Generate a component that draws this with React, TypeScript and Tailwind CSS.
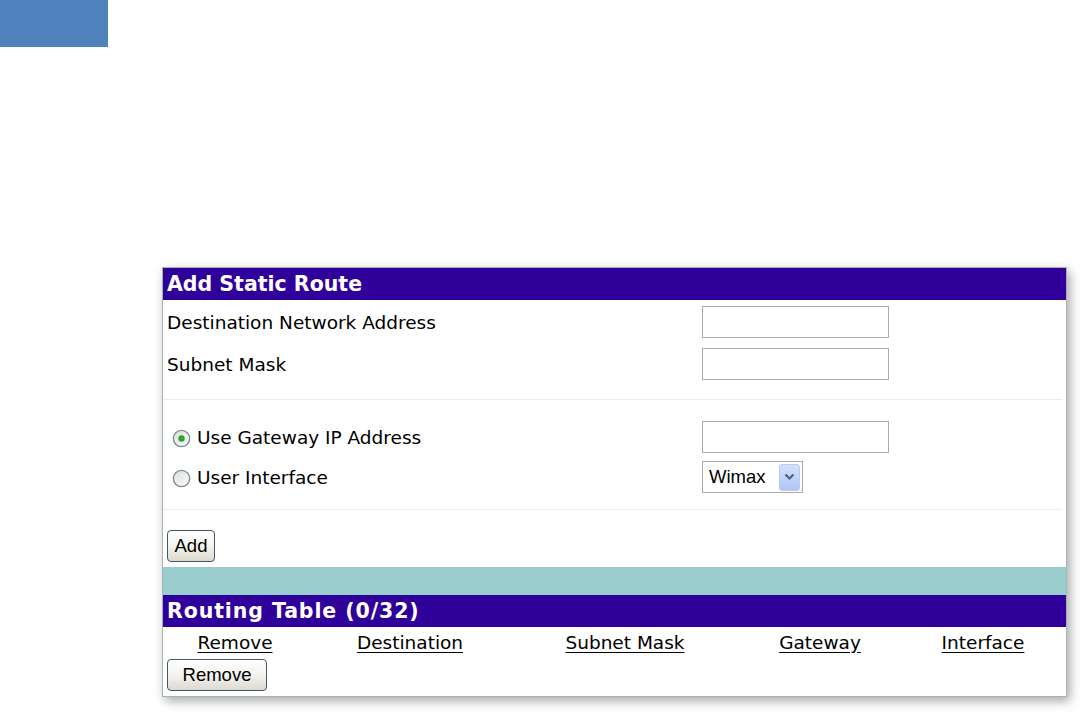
import React from "react";

function Radio({ checked }: { checked?: boolean }) {
  return (
    <svg width="19" height="19" viewBox="0 0 19 19" className="shrink-0">
      <defs>
        <linearGradient id={checked ? "rg1" : "rg2"} x1="0" y1="0" x2="1" y2="1">
          <stop offset="0" stopColor="#d9dbd6" />
          <stop offset="1" stopColor="#ffffff" />
        </linearGradient>
      </defs>
      <circle cx="9.5" cy="9.5" r="8.2" fill={`url(#${checked ? "rg1" : "rg2"})`} stroke="#7d8c99" strokeWidth="1.3" />
      {checked && <circle cx="9.5" cy="9.5" r="3.2" fill="#2ea52e" />}
    </svg>
  );
}

function Btn({ children, w }: { children: React.ReactNode; w: string }) {
  return (
    <div
      className={`${w} h-[32px] flex items-center justify-center rounded-[4px] border border-[#44546a] bg-gradient-to-b from-[#ffffff] via-[#f4f3ee] to-[#dcdad0] text-[18.5px] text-black`}
      style={{ fontFamily: '"Liberation Sans", Arial, sans-serif' }}
    >
      {children}
    </div>
  );
}

function TextInput() {
  return <div className="w-[187px] h-[32px] border border-[#a5acb2] bg-white" />;
}

export default function App() {
  const cols = [
    { label: "Remove", w: "w-[144px]" },
    { label: "Destination", w: "w-[206px]" },
    { label: "Subnet Mask", w: "w-[224px]" },
    { label: "Gateway", w: "w-[166px]" },
    { label: "Interface", w: "w-[160px]" },
  ];
  return (
    <div
      className="w-[1088px] h-[720px] bg-white relative overflow-hidden text-black"
      style={{ fontFamily: '"DejaVu Sans", Verdana, sans-serif' }}
    >
      <div className="w-[108px] h-[47px] bg-[#4f81bd]" />
      <div className="ml-[162px] mt-[220px] w-[905px] border border-[#a3b5b5] bg-white shadow-[3px_4px_10px_rgba(0,0,0,0.35)]">
        {/* Header */}
        <div className="h-[32px] bg-[#30009a] flex items-center pl-[4px] text-white font-bold text-[20.5px] leading-none">
          Add Static Route
        </div>
        {/* Block 1 */}
        <div className="pt-[6px] pb-[19px] flex flex-col gap-[10px]">
          <div className="flex items-center h-[32px]">
            <div className="w-[539px] pl-[4px] pt-[2px] text-[18.5px]">Destination Network Address</div>
            <TextInput />
          </div>
          <div className="flex items-center h-[32px]">
            <div className="w-[539px] pl-[4px] pt-[2px] text-[18.5px]">Subnet Mask</div>
            <TextInput />
          </div>
        </div>
        <div className="h-[1px] mr-[4px] bg-[#ececec]" />
        {/* Block 2 */}
        <div className="pt-[21px] pb-[16px] flex flex-col gap-[8px]">
          <div className="flex items-center h-[32px]">
            <div className="w-[539px] pl-[9px] pt-[2px] flex items-center gap-[6px] text-[18.5px]">
              <Radio checked />
              <span>Use Gateway IP Address</span>
            </div>
            <TextInput />
          </div>
          <div className="flex items-center h-[32px]">
            <div className="w-[539px] pl-[9px] pt-[2px] flex items-center gap-[6px] text-[18.5px]">
              <Radio />
              <span>User Interface</span>
            </div>
            <div className="w-[101px] h-[32px] border border-[#a5acb2] bg-white flex items-center justify-between pl-[6px] pr-[2px]">
              <span className="text-[18.5px]" style={{ fontFamily: '"Liberation Sans", Arial, sans-serif' }}>
                Wimax
              </span>
              <div className="w-[21px] h-[27px] rounded-[3px] bg-gradient-to-b from-[#d3e0fd] to-[#b1c6f5] border border-[#b9cbf3] flex items-center justify-center">
                <svg width="11" height="8" viewBox="0 0 11 8">
                  <path d="M1.5 1.5 L5.5 5.5 L9.5 1.5" fill="none" stroke="#4d6185" strokeWidth="2.2" />
                </svg>
              </div>
            </div>
          </div>
        </div>
        <div className="h-[1px] mr-[4px] bg-[#ececec]" />
        <div className="pt-[20px] pb-[5px] pl-[4px]">
          <Btn w="w-[48px]">Add</Btn>
        </div>
        <div className="h-[28px] bg-[#99cccc]" />
        <div className="h-[32px] bg-[#30009a] flex items-center pl-[4px] text-white font-bold text-[20.5px] leading-none tracking-[0.9px]">
          Routing Table (0/32)
        </div>
        <div className="flex h-[31px] items-center">
          {cols.map((c) => (
            <div key={c.label} className={`${c.w} text-center text-[18.5px]`}>
              <span className="underline underline-offset-[3px]">{c.label}</span>
            </div>
          ))}
        </div>
        <div className="pt-[1px] pb-[5px] pl-[4px]">
          <Btn w="w-[100px]">Remove</Btn>
        </div>
      </div>
    </div>
  );
}
